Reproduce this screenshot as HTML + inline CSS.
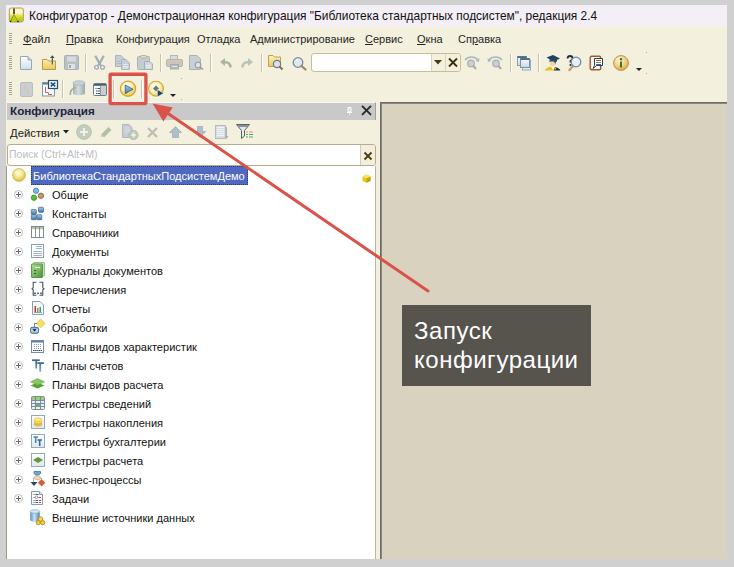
<!DOCTYPE html>
<html><head><meta charset="utf-8"><style>
*{margin:0;padding:0;box-sizing:border-box}
html,body{width:734px;height:567px;overflow:hidden;background:#d0d0d0;font-family:"Liberation Sans",sans-serif;position:relative}
div,svg{position:absolute}
svg{overflow:visible}
.txt{white-space:nowrap;color:#111}
.mn{top:33px;font-size:11px;line-height:13px;color:#262626}
.mn u{text-decoration:underline;text-underline-offset:1px;text-decoration-thickness:1px}
.grip{width:3px;background:repeating-linear-gradient(#a8a68e 0 1px,transparent 1px 2px)}
.sep{width:2px;background:linear-gradient(90deg,#c8c3ae 0 1px,#fdfcf6 1px 2px)}
.row{left:6px;width:369px;height:19px;font-size:11px;line-height:19px}
.row .t{left:46px;top:1px;font-size:11.5px;transform:scaleX(0.96);transform-origin:0 0}
.plus{left:8px;top:5px;width:9px;height:9px;border:1px solid #bdbdbd;border-radius:50%}
.plus:before{content:"";position:absolute;left:1px;top:3px;width:5px;height:1px;background:#6a6a6a}
.plus:after{content:"";position:absolute;left:3px;top:1px;width:1px;height:5px;background:#6a6a6a}
</style></head><body>
<div style="left:6px;top:5px;width:721px;height:554px;background:#f3f0dd"></div>
<div style="left:6px;top:5px;width:721px;height:21px;background:#f4eff6"></div><div style="left:6px;top:26px;width:721px;height:1px;background:#f4f0ea"></div>
<svg style="left:8px;top:7px" width="16" height="16" viewBox="0 0 16 16">
<defs><linearGradient id="ti" x1="0" y1="0" x2="0" y2="1"><stop offset="0" stop-color="#fdf8c8"/><stop offset="0.35" stop-color="#fbf6d8"/><stop offset="0.55" stop-color="#e8e040"/><stop offset="1" stop-color="#c0c818"/></linearGradient></defs>
<rect x="1.3" y="1" width="14" height="14" rx="2" fill="url(#ti)" stroke="#b0a040" stroke-width="1"/>
<path d="M2.5 13 L6 8 L9 13 L13.5 9 V14 H2.5Z" fill="#a8d020" opacity="0.7"/>
<path d="M6 1.5 V7" stroke="#303020" stroke-width="1.6"/>
<path d="M6 7.5 L2.5 14.5 M6 7.5 L10 14.5" stroke="#6a7010" stroke-width="0.6"/>
<circle cx="2.5" cy="14.5" r="0.8" fill="#202010"/><circle cx="10" cy="14.5" r="0.8" fill="#202010"/>
</svg>
<div class="txt" style="left:29px;top:9px;font-size:11.92px;line-height:14px;color:#101010">Конфигуратор - Демонстрационная конфигурация "Библиотека стандартных подсистем", редакция 2.4</div>
<div class="grip" style="left:9px;top:33px;height:11px"></div>
<div class="txt mn" style="left:23px"><u>Ф</u>айл</div>
<div class="txt mn" style="left:66px"><u>П</u>равка</div>
<div class="txt mn" style="left:116px">Конфигурация</div>
<div class="txt mn" style="left:197px">Отладка</div>
<div class="txt mn" style="left:250px">Администрирование</div>
<div class="txt mn" style="left:365px"><u>С</u>ервис</div>
<div class="txt mn" style="left:417px"><u>О</u>кна</div>
<div class="txt mn" style="left:458px">Сп<u>р</u>авка</div>
<div class="grip" style="left:9px;top:56px;height:13px"></div>
<div class="grip" style="left:9px;top:82px;height:13px"></div>
<svg style="left:19px;top:55px" width="14" height="16" viewBox="0 0 14 16"><defs><linearGradient id="nd" x1="0" y1="0" x2="0" y2="1"><stop offset="0" stop-color="#fff"/><stop offset="1" stop-color="#cfdff0"/></linearGradient></defs><path d="M1.5 1.5 H9 L12.5 5 V14.5 H1.5Z" fill="url(#nd)" stroke="#9aa6b0"/><path d="M9 1.5 V5 H12.5" fill="#cbd6e0" stroke="#9aa6b0"/></svg>
<svg style="left:41px;top:54px" width="16" height="17" viewBox="0 0 16 17"><defs><linearGradient id="fo" x1="0" y1="0" x2="0" y2="1"><stop offset="0" stop-color="#fbeeb0"/><stop offset="1" stop-color="#e8c860"/></linearGradient></defs><path d="M1.5 5.5 H6 L7.5 7 H14.5 V15.5 H1.5Z" fill="url(#fo)" stroke="#c09a40"/><path d="M11.3 10.5 V3" stroke="#34506a" stroke-width="1.1"/><path d="M9 4 L11.3 1.2 L13.6 4Z" fill="#34506a"/></svg>
<svg style="left:64px;top:55px" width="15" height="15" viewBox="0 0 15 15"><rect x="0.5" y="0.5" width="14" height="14" rx="1" fill="#b8c0c6" stroke="#a8b0b6"/><rect x="3" y="1.5" width="9" height="5" fill="#d4dadf"/><rect x="4" y="9" width="7" height="5" fill="#dfe3e6"/><rect x="5" y="10" width="2" height="3" fill="#a0a8ae"/></svg>
<div class="sep" style="left:85px;top:54px;height:18px"></div>
<svg style="left:93px;top:55px" width="13" height="15" viewBox="0 0 13 15"><path d="M2.3 0.8 L7.3 10" stroke="#a4aeb6" stroke-width="2.3"/><path d="M10.7 0.8 L5.7 10" stroke="#a4aeb6" stroke-width="2.3"/><circle cx="3.5" cy="12.3" r="1.9" fill="#eef0f0" stroke="#a0aab2" stroke-width="1.3"/><circle cx="9.5" cy="12.3" r="1.9" fill="#eef0f0" stroke="#a0aab2" stroke-width="1.3"/><path d="M4.5 10.8 L6.5 8.5 L8.5 10.8" fill="none" stroke="#a0aab2" stroke-width="1.2"/></svg>
<svg style="left:115px;top:55px" width="16" height="16" viewBox="0 0 16 16"><path d="M0.5 0.5 H6 L9.5 4 V11.5 H0.5Z" fill="#c6ced6" stroke="#aab4bc"/><path d="M2 6.5 H5 M2 8.5 H7" stroke="#b0bac2" stroke-width="1"/><path d="M6.5 4.5 H11 L14.5 8 V14.5 H6.5Z" fill="#c6ced6" stroke="#aab4bc"/><path d="M8 9.5 H13 M8 11.5 H13 M8 13 H13" stroke="#e2e8ec" stroke-width="1"/></svg>
<svg style="left:137px;top:55px" width="17" height="16" viewBox="0 0 17 16"><rect x="0.5" y="1.5" width="12" height="13" rx="1" fill="#c4ccd2" stroke="#aab2b8"/><rect x="3.5" y="0.5" width="6" height="2.5" rx="1" fill="#e0dcc0" stroke="#b8b498"/><path d="M7.5 6.5 H13 L15.5 9 V14.5 H7.5Z" fill="#d0d8de" stroke="#a8b0b6"/><path d="M9 10.5 H14 M9 12.5 H14" stroke="#eef0f2" stroke-width="1"/></svg>
<div class="sep" style="left:160px;top:54px;height:18px"></div>
<svg style="left:166px;top:55px" width="17" height="15" viewBox="0 0 17 15"><rect x="4.5" y="0.5" width="7" height="5" fill="#d8dde0" stroke="#b4b8b8"/><rect x="0.5" y="4.5" width="16" height="7" rx="1.5" fill="#ccc8c0" stroke="#b8b4ac"/><path d="M3 7.5 H14" stroke="#d4b0a0" stroke-width="0.8" stroke-dasharray="1 1"/><rect x="4.5" y="9.5" width="8" height="4.5" fill="#b8bcbc" stroke="#a8acac"/><path d="M6 11.5 H11" stroke="#e0e2e2" stroke-width="1"/></svg>
<svg style="left:189px;top:55px" width="15" height="15" viewBox="0 0 15 15"><path d="M0.5 0.5 H8 L11.5 4 V14.5 H0.5Z" fill="#c8d0d6" stroke="#aab2b8"/><circle cx="9" cy="10" r="2.8" fill="#dfe4e8" stroke="#9aa2a8" stroke-width="1.2"/><path d="M11 12 L14 14.5" stroke="#a89888" stroke-width="1.6"/></svg>
<div class="sep" style="left:210px;top:54px;height:18px"></div>
<svg style="left:220px;top:58px" width="12" height="10" viewBox="0 0 12 10"><path d="M10.5 9.5 C10.5 5 8 4 4 4" fill="none" stroke="#a8b4a8" stroke-width="2.4"/><path d="M0 4 L5 0 V8Z" fill="#a8b4a8"/></svg>
<svg style="left:241px;top:58px" width="12" height="10" viewBox="0 0 12 10"><path d="M1.5 9.5 C1.5 5 4 4 8 4" fill="none" stroke="#b8c2b8" stroke-width="2.4"/><path d="M12 4 L7 0 V8Z" fill="#b8c2b8"/></svg>
<div class="sep" style="left:261px;top:54px;height:18px"></div>
<svg style="left:267px;top:54px" width="17" height="17" viewBox="0 0 17 17"><defs><linearGradient id="fs" x1="0" y1="0" x2="0" y2="1"><stop offset="0" stop-color="#fdf2c0"/><stop offset="1" stop-color="#e6c868"/></linearGradient></defs><path d="M1.5 1.5 H6 L7.5 3 H13.5 V12.5 H1.5Z" fill="url(#fs)" stroke="#c0a050"/><circle cx="10" cy="10" r="3.6" fill="#d6e4f0" stroke="#707880" stroke-width="1.2"/><path d="M12.5 12.5 L15.5 15.5" stroke="#8a6a50" stroke-width="2"/></svg>
<svg style="left:292px;top:56px" width="16" height="16" viewBox="0 0 16 16"><circle cx="6" cy="6.5" r="4.8" fill="#dce8f6" stroke="#7a8894" stroke-width="1.3"/><path d="M4 4.5 Q5 3.5 6.5 3.6" stroke="#fff" stroke-width="1" fill="none"/><path d="M9.5 10 L13.5 13.5" stroke="#a88068" stroke-width="2.2" stroke-linecap="round"/></svg>
<div style="left:311px;top:53px;width:150px;height:19px;background:#fff;border:1px solid #c9bd98;border-radius:3px"></div>
<div style="left:431px;top:54px;width:29px;height:17px;background:#f4f0de;border-left:1px solid #dcd4b8;border-radius:0 2px 2px 0"></div>
<div style="left:445px;top:54px;width:1px;height:17px;background:#dcd4b8"></div>
<svg style="left:434px;top:60px" width="8" height="5" viewBox="0 0 8 5"><path d="M0 0 H8 L4 4.5Z" fill="#4a3a10"/></svg>
<svg style="left:448px;top:58px" width="10" height="9" viewBox="0 0 10 9"><path d="M1 0.5 L9 8.5 M9 0.5 L1 8.5" stroke="#3a2e10" stroke-width="1.8"/></svg>
<svg style="left:464px;top:56px" width="16" height="14" viewBox="0 0 16 14"><path d="M1 4 C4 0 11 0 14 4" fill="none" stroke="#b0b8be" stroke-width="1.6"/><path d="M15.5 2 L15 6 L11.5 5Z" fill="#b0b8be"/><circle cx="7" cy="7.5" r="3.3" fill="#c8ced4" stroke="#a8b0b6" stroke-width="1.2"/><path d="M9.5 10 L12 13" stroke="#b4a898" stroke-width="2"/></svg>
<svg style="left:487px;top:56px" width="16" height="14" viewBox="0 0 16 14"><path d="M15 4 C12 0 5 0 2 4" fill="none" stroke="#b0b8be" stroke-width="1.6"/><path d="M0.5 2 L1 6 L4.5 5Z" fill="#b0b8be"/><circle cx="9" cy="7.5" r="3.3" fill="#c8ced4" stroke="#a8b0b6" stroke-width="1.2"/><path d="M11.5 10 L14 13" stroke="#b4a898" stroke-width="2"/></svg>
<div class="sep" style="left:510px;top:54px;height:18px"></div>
<svg style="left:516px;top:55px" width="16" height="16" viewBox="0 0 16 16"><defs><linearGradient id="wg" x1="0" y1="0" x2="0" y2="1"><stop offset="0" stop-color="#f8fbfe"/><stop offset="1" stop-color="#c8d8e6"/></linearGradient></defs><rect x="1.5" y="1.5" width="9" height="9" fill="url(#wg)" stroke="#8aa0b2"/><rect x="1.5" y="1.2" width="9" height="1.8" fill="#4f6c82"/><rect x="6.5" y="5" width="8" height="10" fill="#e4ecf2" stroke="#98aab8"/><rect x="4.5" y="3.5" width="9" height="9" fill="url(#wg)" stroke="#7a92a6"/><rect x="4.5" y="3.2" width="9" height="1.8" fill="#4f6c82"/></svg>
<div class="sep" style="left:538px;top:54px;height:18px"></div>
<svg style="left:544px;top:54px" width="17" height="17" viewBox="0 0 17 17"><path d="M2.5 3.5 L9 1 L16 4.5 L9.5 7.5Z" fill="#1f4260"/><path d="M2.5 3.5 V7" stroke="#e8f0f8" stroke-width="1"/><path d="M5.5 5.5 V8 Q9 9.5 13 7.5 V5" fill="#2a4a66"/><path d="M6 7.5 Q5.5 12 8.5 12.5 Q11 12.5 11 9 L10 7.5Z" fill="#f2d2b8"/><path d="M9 7.5 Q11.5 8 11 11 L12 8Z" fill="#6a4a30"/><path d="M0.5 16.5 Q3 13 7 12.5 L9.5 16.5Z" fill="#e8c020"/><path d="M7 12.5 L9.5 16.5 L11 13Z" fill="#fff8d8"/><path d="M11 13 Q15 13.5 16.5 16.5 H9.5Z" fill="#1f3048"/><path d="M11 13 L12.5 14.5 L10.5 16.5" fill="#e0b820"/></svg>
<svg style="left:566px;top:55px" width="18" height="17" viewBox="0 0 18 17"><path d="M1.5 3.5 Q1.8 1 4 1 Q6.5 1 6.5 3.3 Q6.5 5 4.5 6 V7.5" fill="none" stroke="#1a3048" stroke-width="1.8"/><circle cx="4.5" cy="10" r="1.1" fill="#1a3048"/><path d="M7 11 L3.5 15" stroke="#c89878" stroke-width="2.4" stroke-linecap="round"/><circle cx="10" cy="7" r="4.8" fill="#e4eef8" stroke="#7a8894" stroke-width="1.3"/><path d="M8 5 Q9 4 10.5 4.2" stroke="#fff" stroke-width="1" fill="none"/></svg>
<svg style="left:589px;top:55px" width="15" height="16" viewBox="0 0 15 16"><rect x="1.2" y="1.2" width="10.5" height="13.6" rx="1.5" fill="#fbf2ea" stroke="#9a5a3a" stroke-width="1.4"/><path d="M5.5 3.5 H13.5 V10.5 H7.5 L4 13.5 L5.5 10.5Z" fill="#fdfdfd" stroke="#2a3a50" stroke-width="1" stroke-linejoin="round"/><path d="M7 5.5 H12" stroke="#c84030" stroke-width="1"/><path d="M7 7.5 H12" stroke="#40a050" stroke-width="1"/><path d="M7 9.5 H12" stroke="#4060c0" stroke-width="1"/></svg>
<svg style="left:613px;top:55px" width="16" height="16" viewBox="0 0 16 16"><defs><radialGradient id="inf" cx="0.4" cy="0.3" r="0.8"><stop offset="0" stop-color="#fff4d8"/><stop offset="0.6" stop-color="#f0c878"/><stop offset="1" stop-color="#d09840"/></radialGradient></defs><circle cx="8" cy="8" r="7.4" fill="url(#inf)" stroke="#c09048" stroke-width="1"/><circle cx="8" cy="4.2" r="1.2" fill="#3a7a20"/><rect x="7" y="6.5" width="2" height="6" fill="#3a7a20"/></svg>
<svg style="left:636px;top:68px" width="6" height="3" viewBox="0 0 6 3"><path d="M0 0 H6 L3 3Z" fill="#222"/></svg>
<svg style="left:20px;top:82px" width="13" height="15" viewBox="0 0 13 15"><rect x="0.5" y="0.5" width="12" height="14" rx="1.5" fill="#c8ced2" stroke="#b8bec2"/><path d="M4.5 3 V7.5 H7 M7.5 7.5 V11.5 H10" fill="none" stroke="#d4bfb0" stroke-width="1"/><rect x="3" y="2" width="3" height="2" fill="#d8c8b8"/><rect x="6" y="6.5" width="3" height="2" fill="#d8c8b8"/><rect x="9" y="10.5" width="3" height="2" fill="#d8c8b8"/></svg>
<svg style="left:42px;top:80px" width="16" height="17" viewBox="0 0 16 17"><rect x="0.5" y="2.5" width="12" height="13.5" fill="#f8fbfd" stroke="#7a98b0"/><rect x="1" y="3" width="11" height="1.5" fill="#5a80a0"/><path d="M3.5 7 V12.5 H6 M6.5 12.5 V14.5 H10" fill="none" stroke="#c85040" stroke-width="0.9"/><rect x="6.5" y="0.5" width="9" height="8" fill="#eef4fa" stroke="#2a5070" stroke-width="1.2"/><path d="M8.7 2.7 L13.3 6.3 M13.3 2.7 L8.7 6.3" stroke="#2a5070" stroke-width="1.5"/></svg>
<div class="sep" style="left:62px;top:80px;height:18px"></div>
<svg style="left:68px;top:80px" width="18" height="17" viewBox="0 0 18 17"><defs><linearGradient id="db" x1="0" y1="0" x2="1" y2="0"><stop offset="0" stop-color="#a8b4bc"/><stop offset="0.45" stop-color="#d4dce2"/><stop offset="1" stop-color="#9aa6ae"/></linearGradient></defs><path d="M5 3 V14 Q11 16.5 17 14 V3Z" fill="url(#db)"/><ellipse cx="11" cy="3" rx="6" ry="2.3" fill="#c6d0d6" stroke="#a0acb4" stroke-width="0.6"/><path d="M2.3 15 Q1.8 9.5 6.5 8" fill="none" stroke="#a0b498" stroke-width="1.7"/><path d="M5 5.8 L8.5 7.8 L5.2 10.3Z" fill="#a0b498"/></svg>
<svg style="left:93px;top:83px" width="14" height="13" viewBox="0 0 14 13"><rect x="0.5" y="0.5" width="13" height="12" rx="1" fill="#f6f9fb" stroke="#6a8090"/><rect x="1" y="1" width="12" height="1.8" fill="#3f5c70"/><rect x="8" y="2.8" width="5" height="9.2" fill="#cacdcc"/><path d="M7.5 2.8 V12" stroke="#8a9aa6" stroke-width="1"/><path d="M2.5 5.5 H3.5 M4.5 5.5 H7 M3 8 H4 M4.5 8 H7 M3 10.5 H4 M4.5 10.5 H7" stroke="#3a5064" stroke-width="1"/></svg>
<div class="sep" style="left:113px;top:80px;height:18px"></div>
<svg style="left:119px;top:80px" width="18" height="18" viewBox="0 0 18 18"><defs><radialGradient id="pl" cx="0.4" cy="0.3" r="0.8"><stop offset="0" stop-color="#fffef4"/><stop offset="0.45" stop-color="#fbeeb0"/><stop offset="0.8" stop-color="#f0cc50"/><stop offset="1" stop-color="#d8a828"/></radialGradient><linearGradient id="pt" x1="0" y1="0" x2="0" y2="1"><stop offset="0" stop-color="#b0d4f0"/><stop offset="1" stop-color="#3a78b8"/></linearGradient></defs><circle cx="9" cy="8.7" r="7.6" fill="url(#pl)" stroke="#d0a830" stroke-width="1.2"/><path d="M6.3 5 L14 9.3 L6.3 13.6Z" fill="url(#pt)" stroke="#2a5a88" stroke-width="0.8" stroke-linejoin="round"/></svg>
<div class="sep" style="left:141px;top:80px;height:18px"></div>
<svg style="left:148px;top:80px" width="17" height="18" viewBox="0 0 17 18"><defs><radialGradient id="dg" cx="0.4" cy="0.35" r="0.8"><stop offset="0" stop-color="#fffef4"/><stop offset="0.5" stop-color="#fbeeb0"/><stop offset="0.85" stop-color="#f0cc50"/><stop offset="1" stop-color="#d8a828"/></radialGradient></defs><circle cx="8" cy="8.7" r="7.4" fill="url(#dg)" stroke="#d0a830" stroke-width="1.1"/><path d="M8 5.5 L11 8.5 L8 11.5 L5 8.5Z" fill="#5a7a80"/><path d="M9.3 9.5 L15.8 13.2 L9.3 17Z" fill="#1f4868" stroke="#f4f8fc" stroke-width="0.6"/></svg>
<svg style="left:170px;top:94px" width="6" height="3" viewBox="0 0 6 3"><path d="M0 0 H6 L3 3Z" fill="#222"/></svg>
<div style="left:646px;top:52px;width:1px;height:1px;background:#b0ab98"></div>
<div style="left:646px;top:73px;width:1px;height:1px;background:#b0ab98"></div>
<div style="left:181px;top:78px;width:1px;height:1px;background:#b0ab98"></div>
<div style="left:181px;top:99px;width:1px;height:1px;background:#b0ab98"></div>
<div style="left:7px;top:102px;width:369px;height:18px;background:#c9c9c9;border-top:1px solid #f8f8f8;border-right:1px solid #a0a0a0"></div>
<div class="txt" style="left:10px;top:104px;font-size:11.7px;line-height:14px;font-weight:bold;color:#24243a">Конфигурация</div>
<svg style="left:346px;top:107px" width="7" height="8"><path d="M2 0.5 H5 V5 H2Z" fill="#d8d8d8" stroke="#fff" stroke-width="1"/><path d="M1 5.5 H6" stroke="#fff" stroke-width="1"/><path d="M3.5 6 V8" stroke="#f0f0f0" stroke-width="1"/></svg>
<svg style="left:361px;top:105px" width="11" height="10"><path d="M1 0.8 L10 9.8 M10 0.8 L1 9.8" stroke="#2a2a2a" stroke-width="1.9"/></svg>
<div class="txt" style="left:10px;top:127px;font-size:11.3px;line-height:13px;color:#222">Действия</div>
<svg style="left:63px;top:130px" width="6" height="4"><path d="M0 0 H6 L3 3.5Z" fill="#222"/></svg>
<svg style="left:76px;top:124px" width="16" height="16" viewBox="0 0 16 16"><circle cx="8" cy="8" r="7.4" fill="#c4ccbe" stroke="#b4bcb0" stroke-width="0.8"/><path d="M8 4 V12 M4 8 H12" stroke="#eef2ec" stroke-width="2"/></svg>
<svg style="left:100px;top:126px" width="13" height="12" viewBox="0 0 13 12"><path d="M1 11 L1.5 8 L8.5 1 L11.5 4 L4.5 11Z" fill="#b2c0aa"/><path d="M1 11 L1.5 8 L4.5 11Z" fill="#c8d0c0"/></svg>
<svg style="left:122px;top:124px" width="17" height="16" viewBox="0 0 17 16"><path d="M0.5 0.5 H7 L10 3.5 V13.5 H0.5Z" fill="#c4ccd4" stroke="#b0b8c0"/><path d="M2.5 4 H7 M2.5 6 H8 M2.5 8 H8" stroke="#e2e6ea" stroke-width="0.8"/><circle cx="11.5" cy="11" r="4.6" fill="#c0cabb" stroke="#aeb8aa" stroke-width="0.8"/><path d="M11.5 8.5 V13.5 M9 11 H14" stroke="#eef2ec" stroke-width="1.6"/></svg>
<svg style="left:147px;top:127px" width="11" height="11" viewBox="0 0 11 11"><path d="M1 1 L10 10 M10 1 L1 10" stroke="#c4bcb4" stroke-width="2.4"/></svg>
<svg style="left:169px;top:126px" width="13" height="12" viewBox="0 0 13 12"><path d="M6.5 0.5 L12.5 6.5 H9.5 V11.5 H3.5 V6.5 H0.5Z" fill="#aebfcc" stroke="#a0b0bc" stroke-width="0.8"/></svg>
<svg style="left:194px;top:126px" width="12" height="12" viewBox="0 0 12 12"><path d="M6 11.5 L11.5 5.5 H8.5 V0.5 H3.5 V5.5 H0.5Z" fill="#aebfcc" stroke="#a0b0bc" stroke-width="0.8"/></svg>
<svg style="left:215px;top:125px" width="14" height="15" viewBox="0 0 14 15"><rect x="0.5" y="0.5" width="10" height="13" fill="#d6dce0" stroke="#b4bcc2"/><path d="M2 2.5 H9 M2 4.5 H9 M2 6.5 H9 M2 8.5 H9 M2 10.5 H9" stroke="#f2f4f6" stroke-width="1"/><path d="M11.5 2 V12" stroke="#a8b2b8" stroke-width="1"/><path d="M9.5 11 L11.5 14 L13.5 11Z" fill="#a8b2b8"/></svg>
<svg style="left:236px;top:124px" width="18" height="16" viewBox="0 0 18 16"><path d="M0.5 0.5 H13.5 L8.5 6.5 V12 L5.5 14.5 V6.5Z" fill="#e6e8ea" stroke="#5a6068" stroke-width="1"/><path d="M1.5 1 H12.5 L11 3 H3Z" fill="#8a9098"/><path d="M10 8 H12 M13 8 H17" stroke="#e0a030" stroke-width="1"/><path d="M10 10.5 H12 M13 10.5 H17" stroke="#30a0c0" stroke-width="1"/><path d="M10 13 H12 M13 13 H17" stroke="#70a040" stroke-width="1"/></svg>
<div style="left:7px;top:144px;width:369px;height:22px;background:#fff;border:1px solid #b4ac8c;border-radius:3px"></div>
<div style="left:360px;top:145px;width:15px;height:20px;background:#f3efde;border-left:1px solid #d6cdb0;border-radius:0 2px 2px 0"></div>
<svg style="left:364px;top:152px" width="8" height="8"><path d="M0.5 0.5 L7.5 7.5 M7.5 0.5 L0.5 7.5" stroke="#4a3c10" stroke-width="1.8"/></svg>
<div class="txt" style="left:9px;top:147px;font-size:10.5px;line-height:14px;color:#bdbdbd">Поиск (Ctrl+Alt+M)</div>
<div style="left:6px;top:166px;width:370px;height:393px;background:#fff;border-left:1px solid #a09b78;border-right:1px solid #b9b5a6"></div>
<div style="left:31px;top:166px;width:217px;height:19px;background:#5069c0;border:1px dotted #2a3a80"></div>
<div class="txt" style="left:33px;top:167px;font-size:11.5px;line-height:19px;color:#fff;transform:scaleX(0.96);transform-origin:0 0">БиблиотекаСтандартныхПодсистемДемо</div>
<svg style="left:12px;top:168px" width="14" height="14"><defs><radialGradient id="yg" cx="0.45" cy="0.35" r="0.7"><stop offset="0" stop-color="#fffef0"/><stop offset="0.45" stop-color="#f8e890"/><stop offset="1" stop-color="#d8b030"/></radialGradient></defs><circle cx="7" cy="7" r="6.4" fill="url(#yg)" stroke="#d0b040" stroke-width="0.8"/></svg>
<svg style="left:362px;top:174px" width="9" height="9"><path d="M4.5 0.5 L8.5 2.5 V7 L4.5 8.7 L0.5 7 V2.5Z" fill="#e8c820"/><path d="M4.5 4.2 L8.5 2.5 V7 L4.5 8.7Z" fill="#c8a010"/><path d="M0.5 2.5 L4.5 0.5 L8.5 2.5 L4.5 4.2Z" fill="#f8e860"/></svg>
<div class="txt row" style="top:185px"><div class="plus"></div><div class="t">Общие</div></div>
<div class="txt row" style="top:204px"><div class="plus"></div><div class="t">Константы</div></div>
<div class="txt row" style="top:223px"><div class="plus"></div><div class="t">Справочники</div></div>
<div class="txt row" style="top:242px"><div class="plus"></div><div class="t">Документы</div></div>
<div class="txt row" style="top:261px"><div class="plus"></div><div class="t">Журналы документов</div></div>
<div class="txt row" style="top:280px"><div class="plus"></div><div class="t">Перечисления</div></div>
<div class="txt row" style="top:299px"><div class="plus"></div><div class="t">Отчеты</div></div>
<div class="txt row" style="top:318px"><div class="plus"></div><div class="t">Обработки</div></div>
<div class="txt row" style="top:337px"><div class="plus"></div><div class="t">Планы видов характеристик</div></div>
<div class="txt row" style="top:356px"><div class="plus"></div><div class="t">Планы счетов</div></div>
<div class="txt row" style="top:375px"><div class="plus"></div><div class="t">Планы видов расчета</div></div>
<div class="txt row" style="top:394px"><div class="plus"></div><div class="t">Регистры сведений</div></div>
<div class="txt row" style="top:413px"><div class="plus"></div><div class="t">Регистры накопления</div></div>
<div class="txt row" style="top:432px"><div class="plus"></div><div class="t">Регистры бухгалтерии</div></div>
<div class="txt row" style="top:451px"><div class="plus"></div><div class="t">Регистры расчета</div></div>
<div class="txt row" style="top:470px"><div class="plus"></div><div class="t">Бизнес-процессы</div></div>
<div class="txt row" style="top:489px"><div class="plus"></div><div class="t">Задачи</div></div>
<div class="txt row" style="top:508px"><div class="t">Внешние источники данных</div></div>
<svg style="left:31px;top:185px" width="14" height="15" viewBox="0 0 14 15"><circle cx="5.05" cy="5.8" r="2.7" fill="#7ab8e0" stroke="#4a80b0" stroke-width="0.8"/><circle cx="9.95" cy="10.8" r="2.7" fill="#c09878" stroke="#8a6040" stroke-width="0.8"/><circle cx="2.98" cy="12.7" r="2.7" fill="#58c038" stroke="#389018" stroke-width="0.8"/></svg>
<svg style="left:30px;top:207px" width="15" height="15" viewBox="0 0 15 15"><defs><linearGradient id="kb" x1="0" y1="0" x2="0" y2="1"><stop offset="0" stop-color="#a8d0ee"/><stop offset="1" stop-color="#3a70a0"/></linearGradient></defs><rect x="1.3" y="2.5" width="5" height="5" rx="0.8" fill="url(#kb)" stroke="#3a6088" stroke-width="0.7"/><rect x="8.5" y="0.3" width="5" height="5" rx="0.8" fill="url(#kb)" stroke="#3a6088" stroke-width="0.7"/><rect x="1.3" y="7.7" width="5" height="5" rx="0.8" fill="url(#kb)" stroke="#3a6088" stroke-width="0.7"/><rect x="6.8" y="7.7" width="5" height="5" rx="0.8" fill="url(#kb)" stroke="#3a6088" stroke-width="0.7"/></svg>
<svg style="left:31px;top:226px" width="13" height="12" viewBox="0 0 13 12"><rect x="0.5" y="0.5" width="12" height="11" fill="#fff" stroke="#7a8a98"/><rect x="1" y="1" width="11" height="2.2" fill="#c4c490"/><path d="M4.5 0.5 V11.5 M8.5 0.5 V11.5" stroke="#7a8a98" stroke-width="0.9"/></svg>
<svg style="left:31px;top:244px" width="13" height="14" viewBox="0 0 13 14"><rect x="0.5" y="0.5" width="12" height="13" fill="#fbfdfe" stroke="#8aa0b0"/><path d="M5 2.5 H11 M5 4.5 H11" stroke="#a0b4c4" stroke-width="1"/><path d="M2.5 7.5 H11 M2.5 9.5 H11 M2.5 11.5 H11" stroke="#a0b4c4" stroke-width="1"/></svg>
<svg style="left:31px;top:262px" width="14" height="16" viewBox="0 0 14 16"><defs><linearGradient id="jg" x1="0" y1="0" x2="1" y2="1"><stop offset="0" stop-color="#b0dc98"/><stop offset="1" stop-color="#4a9238"/></linearGradient></defs><rect x="2.5" y="0.5" width="11" height="13.5" rx="0.5" fill="#c8e4b8" stroke="#98c488"/><rect x="0.5" y="2" width="11" height="13.5" rx="0.5" fill="url(#jg)" stroke="#5a9848"/><path d="M3 8.5 H5 M3 11.5 H5" stroke="#2a6a20" stroke-width="1.2"/><path d="M4 5.5 H9" stroke="#e8f6e0" stroke-width="1.2"/></svg>
<svg style="left:31px;top:281px" width="14" height="16" viewBox="0 0 14 16"><path d="M5.5 1.2 H2.2 V6.8 L1 7.8 L2.2 8.8 V14.3 H5.5" fill="none" stroke="#40546a" stroke-width="1.1"/><path d="M8.5 1.2 H11.8 V6.8 L13 7.8 L11.8 8.8 V14.3 H8.5" fill="none" stroke="#40546a" stroke-width="1.1"/><rect x="3.2" y="11.5" width="1.6" height="1.6" fill="#3a4a5c"/><rect x="6.2" y="11.5" width="1.6" height="1.6" fill="#3a4a5c"/><rect x="9.2" y="11.5" width="1.6" height="1.6" fill="#3a4a5c"/></svg>
<svg style="left:32px;top:301px" width="12" height="14" viewBox="0 0 12 14"><path d="M0.5 0.5 H8 L11.5 4 V13.5 H0.5Z" fill="#f4f8fc" stroke="#8aa0b0"/><rect x="2.5" y="5" width="1.5" height="6" fill="#c03828"/><rect x="5" y="7" width="1.5" height="4" fill="#9a9058"/><rect x="7.5" y="6" width="1.5" height="5" fill="#40a040"/><path d="M2 11.5 H10" stroke="#7a8a98" stroke-width="0.8"/></svg>
<svg style="left:30px;top:318px" width="16" height="17" viewBox="0 0 16 17"><defs><linearGradient id="ob" x1="0" y1="0" x2="0" y2="1"><stop offset="0" stop-color="#6a9ac0"/><stop offset="0.4" stop-color="#b8dcf4"/><stop offset="1" stop-color="#8ec0e4"/></linearGradient></defs><path d="M10.7 1 L15.2 5.4 L10.7 9.8 L6.2 5.4Z" fill="#f6e060" stroke="#d8c470" stroke-width="0.8"/><path d="M6.5 5.5 H4.5 V9.5" fill="none" stroke="#101010" stroke-width="1.1" stroke-dasharray="1 1"/><rect x="0.6" y="9.3" width="8" height="6" rx="1.5" fill="url(#ob)" stroke="#4a7090" stroke-width="1"/><path d="M2.5 11.2 H6.5 L4.5 13.6Z" fill="#0a0a14"/></svg>
<svg style="left:31px;top:340px" width="13" height="13" viewBox="0 0 13 13"><rect x="0.5" y="0.5" width="12" height="12" fill="#fbfdfe" stroke="#7a8ea0"/><rect x="0.5" y="0.5" width="12" height="2" fill="#6a8298"/><path d="M3.5 4 V11 M5.5 4 V11 M7.5 4 V11 M9.5 4 V11" stroke="#8a9cb0" stroke-width="1" stroke-dasharray="1 1"/><path d="M2 10.5 H11" stroke="#3a4a5a" stroke-width="1" stroke-dasharray="1 1"/></svg>
<svg style="left:31px;top:358px" width="14" height="15" viewBox="0 0 14 15"><defs><linearGradient id="tt" gradientUnits="userSpaceOnUse" x1="0" y1="2" x2="0" y2="14"><stop offset="0" stop-color="#3a6a90"/><stop offset="1" stop-color="#7aa8cc"/></linearGradient></defs><path d="M1 2.2 H8.7" stroke="#3f6688" stroke-width="1.7"/><path d="M5.2 2.5 V10.6" stroke="url(#tt)" stroke-width="1.8"/><path d="M6.3 5.1 H12.9" stroke="#3a6080" stroke-width="1.7"/><path d="M9.2 5.5 V13.7" stroke="url(#tt)" stroke-width="1.8"/></svg>
<svg style="left:30px;top:378px" width="15" height="11" viewBox="0 0 15 11"><path d="M7.5 4.5 L14.5 7.5 L7.5 10.5 L0.5 7.5Z" fill="#58a038"/><path d="M7.5 0.5 L14.5 3.8 L7.5 7.2 L0.5 3.8Z" fill="#88c860" stroke="#5a9a38" stroke-width="0.5"/></svg>
<svg style="left:31px;top:396px" width="14" height="14" viewBox="0 0 14 14"><rect x="0.5" y="0.5" width="13" height="13" rx="1" fill="#e6eff7" stroke="#7a8c9a"/><rect x="1" y="1" width="12" height="3" fill="#9ccc7c"/><path d="M0.5 4.5 H13.5 M0.5 7.5 H13.5 M0.5 10.5 H13.5 M4.5 0.5 V13.5 M9.5 0.5 V13.5" stroke="#7a8c9a" stroke-width="1"/><rect x="5" y="8" width="4" height="2.5" fill="#78b058"/></svg>
<svg style="left:31px;top:415px" width="14" height="14" viewBox="0 0 14 14"><defs><linearGradient id="rg" x1="0" y1="0" x2="0" y2="1"><stop offset="0" stop-color="#ffffff"/><stop offset="1" stop-color="#dde8f0"/></linearGradient></defs><rect x="0.5" y="0.5" width="13" height="13" fill="url(#rg)" stroke="#98a8b6"/><ellipse cx="7" cy="9.3" rx="4" ry="1.9" fill="#e8c040" stroke="#c8a020" stroke-width="0.5"/><ellipse cx="7" cy="7" rx="4" ry="1.9" fill="#f8dc60" stroke="#c8a020" stroke-width="0.5"/><ellipse cx="7" cy="4.7" rx="4" ry="1.9" fill="#fcec90" stroke="#d0a820" stroke-width="0.5"/></svg>
<svg style="left:31px;top:434px" width="14" height="14" viewBox="0 0 14 14"><defs><linearGradient id="rg" x1="0" y1="0" x2="0" y2="1"><stop offset="0" stop-color="#ffffff"/><stop offset="1" stop-color="#dde8f0"/></linearGradient></defs><rect x="0.5" y="0.5" width="13" height="13" fill="url(#rg)" stroke="#98a8b6"/><path d="M2.5 3 H7 M4.7 3 V9" stroke="#4a88b8" stroke-width="1.6"/><path d="M6.5 6 H11 M8.7 6 V12" stroke="#3a6a98" stroke-width="1.6"/></svg>
<svg style="left:31px;top:453px" width="14" height="14" viewBox="0 0 14 14"><defs><linearGradient id="rg" x1="0" y1="0" x2="0" y2="1"><stop offset="0" stop-color="#ffffff"/><stop offset="1" stop-color="#dde8f0"/></linearGradient></defs><rect x="0.5" y="0.5" width="13" height="13" fill="url(#rg)" stroke="#98a8b6"/><path d="M7 4 L12 7 L7 10 L2 7Z" fill="#5a9a38"/></svg>
<svg style="left:30px;top:470px" width="16" height="17" viewBox="0 0 16 17"><path d="M4 1.5 H10.5 V3.5 L8.5 5 H6 L4 3.5Z" fill="#6aaae0" stroke="#3a78b0" stroke-width="0.8"/><path d="M7.2 5 V6" stroke="#888" stroke-width="0.8"/><rect x="5" y="6" width="5" height="3.5" rx="0.8" fill="#f4dcb8" stroke="#c8a880" stroke-width="0.7"/><path d="M5 8 H3.5 V12 M10 8 H11.5 V9.5" fill="none" stroke="#9a9a9a" stroke-width="0.8"/><path d="M0.5 12 H7.5 L4 16Z" fill="#2a4a68"/><path d="M11.6 9.4 L15 12.7 L11.6 16 L8.2 12.7Z" fill="#e05a38" stroke="#c04020" stroke-width="0.5"/></svg>
<svg style="left:31px;top:491px" width="13" height="15" viewBox="0 0 13 15"><path d="M0.5 0.5 H8.5 L11.5 3.5 V13.5 H0.5Z" fill="#f8fafc" stroke="#8a9cac"/><path d="M8.5 0.5 V3.5 H11.5" fill="#dde6ee" stroke="#8a9cac"/><path d="M2.5 3.5 H3.5 M4.5 3.5 H7" stroke="#3a5a80" stroke-width="1"/><circle cx="5.5" cy="6.3" r="1.3" fill="none" stroke="#7a8a98" stroke-width="0.8"/><path d="M2.5 6.5 H3.5" stroke="#3a5a80" stroke-width="1"/><path d="M7.5 6.5 H10" stroke="#c04848" stroke-width="1"/><path d="M2.5 9.5 H3.5 M4.5 9.5 H7 M2.5 11.5 H3.5 M4.5 11.5 H7" stroke="#3a5a80" stroke-width="1"/><path d="M7.8 9.5 H10 M7.8 11.5 H10" stroke="#c04848" stroke-width="1"/><path d="M7.5 3.5 H8" stroke="#c04848" stroke-width="1"/></svg>
<svg style="left:29px;top:509px" width="17" height="17" viewBox="0 0 17 17"><defs><linearGradient id="ext" x1="0" y1="0" x2="1" y2="0"><stop offset="0" stop-color="#5a90c0"/><stop offset="0.45" stop-color="#c8e0f4"/><stop offset="1" stop-color="#4a80b0"/></linearGradient></defs><path d="M1.2 2.5 V11.5 Q5.8 14 10.7 11.5 V2.5Z" fill="url(#ext)"/><ellipse cx="6" cy="2.5" rx="4.8" ry="1.8" fill="#d8eaf8" stroke="#6a9ac0" stroke-width="0.6"/><circle cx="9.3" cy="13.6" r="2.2" fill="#f0c840" stroke="#b08818" stroke-width="0.8"/><circle cx="13.7" cy="13.6" r="2.2" fill="#f0c840" stroke="#b08818" stroke-width="0.8"/><circle cx="11.5" cy="10" r="2.2" fill="#f8d850" stroke="#b08818" stroke-width="0.8"/></svg>
<div style="left:380px;top:102px;width:347px;height:457px;background:#d8d2bf;border-top:1px solid #6e6c66;border-left:1px solid #6e6c66"></div><div style="left:381px;top:103px;width:346px;height:456px;border-top:1px solid #8a877e;border-left:1px solid #8a877e"></div>
<svg style="left:0;top:0" width="734" height="567">
<rect x="110.1" y="74.25" width="35.8" height="29.3" rx="1" fill="none" stroke="#d9534a" stroke-width="3.3"/>
<path d="M428 291 L160 108" stroke="#d9534a" stroke-width="3" stroke-linecap="round"/>
<path d="M152.5 103.4 L172.7 107.4 L163.4 121.6Z" fill="#d9534a"/>
</svg>
<div style="left:402px;top:305px;width:188.5px;height:81px;background:#57534d"></div>
<div class="txt" style="left:414px;top:316px;font-size:24px;line-height:29px;letter-spacing:0.52px;color:#fff">Запуск<br>конфигурации</div>
</body></html>
